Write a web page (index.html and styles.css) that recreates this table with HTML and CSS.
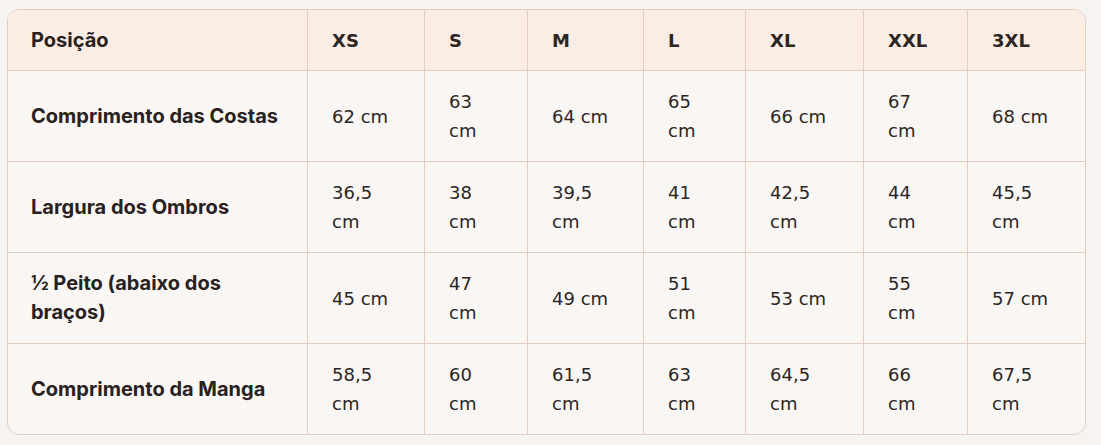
FILE: index.html
```html
<!DOCTYPE html>
<html lang="pt">
<head>
<meta charset="utf-8">
<link rel="stylesheet" href="styles.css">
</head>
<body>
<div class="wrap">
<table class="size-table">
<colgroup>
<col class="c-pos"><col class="c-xs"><col class="c-s"><col class="c-m"><col class="c-l"><col class="c-xl"><col class="c-xxl"><col class="c-3xl">
</colgroup>
<thead>
<tr><th class="label">Posição</th><th>XS</th><th>S</th><th>M</th><th>L</th><th>XL</th><th>XXL</th><th>3XL</th></tr>
</thead>
<tbody>
<tr><td class="label">Comprimento das Costas</td><td>62 cm</td><td>63 cm</td><td>64 cm</td><td>65 cm</td><td>66 cm</td><td>67 cm</td><td>68 cm</td></tr>
<tr><td class="label">Largura dos Ombros</td><td>36,5 cm</td><td>38 cm</td><td>39,5 cm</td><td>41 cm</td><td>42,5 cm</td><td>44 cm</td><td>45,5 cm</td></tr>
<tr><td class="label">½ Peito (abaixo dos braços)</td><td>45 cm</td><td>47 cm</td><td>49 cm</td><td>51 cm</td><td>53 cm</td><td>55 cm</td><td>57 cm</td></tr>
<tr><td class="label">Comprimento da Manga</td><td>58,5 cm</td><td>60 cm</td><td>61,5 cm</td><td>63 cm</td><td>64,5 cm</td><td>66 cm</td><td>67,5 cm</td></tr>
</tbody>
</table>
</div>
</body>
</html>
```
FILE: styles.css
```css
html, body {
  margin: 0;
  background: #f6f3f0;
}
body {
  padding: 9px 0 0 7px;
  font-family: "DejaVu Sans", sans-serif;
  color: #2b2624;
}
.wrap {
  width: 1077px;
  border: 1px solid #e2cfc2;
  border-radius: 12px;
  overflow: hidden;
  background: #faf6f3;
}
.size-table {
  width: 1077px;
  border-collapse: separate;
  border-spacing: 0;
  table-layout: fixed;
  font-size: 18px;
  line-height: 29px;
}
.c-pos { width: 300px; }
.c-xs { width: 117px; }
.c-s { width: 103px; }
.c-m { width: 116px; }
.c-l { width: 102px; }
.c-xl { width: 118px; }
.c-xxl { width: 104px; }
.c-3xl { width: 117px; }
.size-table th,
.size-table td {
  padding: 16px 24px;
  text-align: left;
  vertical-align: middle;
  border-right: 1px solid #e2cfc2;
  border-bottom: 1px solid #e2cfc2;
  font-weight: normal;
}
.size-table th:last-child,
.size-table td:last-child {
  border-right: none;
}
.size-table tbody tr:last-child td {
  border-bottom: none;
}
.size-table thead th {
  background: #fbede4;
  font-weight: bold;
  padding-top: 16px;
  padding-bottom: 15px;
}
.size-table .label {
  font-family: Inter, "DejaVu Sans", sans-serif;
  font-size: 20px;
  font-weight: 700;
  color: #27211f;
  padding-left: 23px;
}
```
